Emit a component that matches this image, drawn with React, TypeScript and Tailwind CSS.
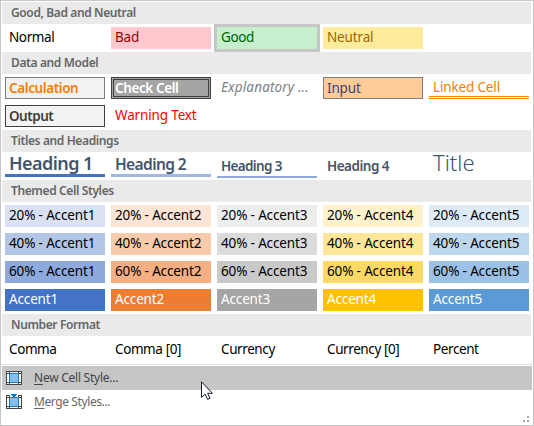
import React from "react";

type Cell = { label: string; box?: string; text?: string };

function Header({ title, tracking = "tracking-[-0.38px]" }: { title: string; tracking?: string }) {
  return (
    <h2 className={`h-[22px] w-[529px] bg-[#eaeaea] pl-[9px] text-[12px] leading-[22px] font-semibold text-[#666] ${tracking}`}>
      {title}
    </h2>
  );
}

function Row({ cells }: { cells: Cell[] }) {
  return (
    <div className="grid h-7 grid-cols-[repeat(5,100px)] items-center gap-x-1.5 pl-[3px]">
      {cells.map((c) => (
        <div key={c.label} className={`h-[22px] whitespace-nowrap ${c.box ?? ""}`}>
          <div className={`h-full pl-1 leading-[20px] ${c.text ?? "text-[13.5px] tracking-[-0.4px] text-black"}`}>{c.label}</div>
        </div>
      ))}
    </div>
  );
}

const body = "text-[13.5px] tracking-[-0.15px]";

const status: Cell[] = [
  { label: "Normal" },
  { label: "Bad", box: "bg-[#ffc7ce]", text: `${body} text-[#9c0006]` },
  { label: "Good", box: "bg-[#c6efce] outline-3 outline-[#c6c6c6]", text: "text-[13.5px] tracking-[-0.4px] text-[#006100]" },
  { label: "Neutral", box: "bg-[#ffeb9c]", text: `${body} text-[#9c6500]` },
];

const data: Cell[] = [
  { label: "Calculation", box: "bg-[#f2f2f2] border border-[#7f7f7f]", text: "text-[13.5px] font-semibold tracking-[-0.4px] text-[#fa7d00] pl-[3px]!" },
  { label: "Check Cell", box: "bg-[#a5a5a5] border-3 border-double border-[#3f3f3f]", text: "text-[13.5px] font-semibold tracking-[-0.4px] text-white pl-[1px]! leading-[16px]!" },
  { label: "Explanatory ...", text: "text-[13.5px] italic tracking-[0.15px] text-[#7f7f7f]" },
  { label: "Input", box: "bg-[#ffcc99] border border-[#7f7f7f]", text: `${body} text-[#3f3f76] pl-[3px]!` },
  { label: "Linked Cell", box: "border-b-3 border-double border-[#ff8001]", text: `${body} text-[#fa7d00]` },
];

const output: Cell[] = [
  { label: "Output", box: "bg-[#f2f2f2] border border-[#3f3f3f]", text: "text-[13.5px] font-semibold tracking-[-0.5px] text-[#3f3f3f] pl-[3px]!" },
  { label: "Warning Text", text: `${body} text-[#ff0000]` },
];

const headings: Cell[] = [
  { label: "Heading 1", box: "border-b-3 border-[#4472c4]", text: "text-[18px] font-semibold tracking-[-0.55px] text-[#44546a] leading-[17px]!" },
  { label: "Heading 2", box: "border-b-3 border-[#a2b8e1]", text: "text-[15.5px] font-semibold tracking-[-0.6px] text-[#44546a] leading-[19px]!" },
  { label: "Heading 3", box: "border-b-2 border-[#8ea9db] translate-y-px", text: "text-[13.5px] font-semibold tracking-[-0.65px] text-[#44546a] leading-[20px]!" },
  { label: "Heading 4", text: "text-[13.5px] font-semibold tracking-[-0.5px] text-[#44546a] leading-[22px]!" },
  { label: "Title", text: "text-[22px] font-light tracking-[0px] text-[#44546a] leading-[15px]!" },
];

const tints = [
  { pct: "20%", fills: ["bg-[#d9e1f2]", "bg-[#fce4d6]", "bg-[#ededed]", "bg-[#fff2cc]", "bg-[#ddebf7]"] },
  { pct: "40%", fills: ["bg-[#b4c6e7]", "bg-[#f8cbad]", "bg-[#dbdbdb]", "bg-[#ffe699]", "bg-[#bdd7ee]"] },
  { pct: "60%", fills: ["bg-[#8ea9db]", "bg-[#f4b084]", "bg-[#c9c9c9]", "bg-[#ffd966]", "bg-[#9bc2e6]"] },
];
const accents = ["bg-[#4472c4]", "bg-[#ed7d31]", "bg-[#a5a5a5]", "bg-[#ffc000]", "bg-[#5b9bd5]"];
const numbers: Cell[] = ["Comma", "Comma [0]", "Currency", "Currency [0]", "Percent"].map((label) => ({ label }));

function StyleIcon({ merge = false }: { merge?: boolean }) {
  return (
    <svg width="16" height="16" viewBox="0 0 16 16" shapeRendering="crispEdges">
      <path d="M0 1h16v14H0z" fill="#fff" />
      <path
        d="M0 1h16v1H0zM0 14h16v1H0zM0 1h1v14H0zM15 1h1v14h-1zM3 1h1v14H3zM12 1h1v14h-1zM0 3h16v1H0zM0 12h16v1H0z"
        fill="#444"
      />
      <path d="M3 3h10v10H3z" fill="#1979ca" />
      <path d="M4 4h8v8H4z" fill="#83beec" />
      {merge && (
        <>
          <path d="M4 0h8v3H4z" fill="#fff" />
          <path d="M5 0h6v1h-1v1H9v1H7V2H6V1H5z" fill="#0072c6" />
        </>
      )}
    </svg>
  );
}

function Action({ first, rest, active = false }: { first: string; rest: string; active?: boolean }) {
  return (
    <div className={`flex h-6 w-[530px] items-center pl-1 ${active ? "bg-[#c6c6c6] text-[#444]" : "text-[#666]"}`}>
      <StyleIcon merge={!active} />
      <span className={`ml-3 text-[12px] leading-6 ${active ? "tracking-[-0.25px]" : "tracking-[-0.4px]"}`}>
        <span className="underline underline-offset-2">{first}</span>
        {rest}
      </span>
    </div>
  );
}

export default function App() {
  return (
    <main className="relative h-[426px] w-[534px] overflow-hidden border border-[#c6c6c6] bg-white pt-px pl-px font-['Noto_Sans','Open_Sans',sans-serif]">
      <Header title="Good, Bad and Neutral" />
      <Row cells={status} />
      <Header title="Data and Model" />
      <Row cells={data} />
      <Row cells={output} />
      <Header title="Titles and Headings" />
      <Row cells={headings} />
      <Header title="Themed Cell Styles" />
      {tints.map((t) => (
        <Row
          key={t.pct}
          cells={t.fills.map((box, i) => ({ label: `${t.pct} - Accent${i + 1}`, box, text: `${body} text-black` }))}
        />
      ))}
      <Row cells={accents.map((box, i) => ({ label: `Accent${i + 1}`, box, text: `${body} text-white` }))} />
      <Header title="Number Format" />
      <Row cells={numbers} />
      <div className="h-0.5 w-[530px] border-t border-[#d5e5e8]" />
      <Action first="N" rest="ew Cell Style..." active />
      <Action first="M" rest="erge Styles..." />
      <svg className="absolute top-[380px] left-[200px]" width="13" height="20" viewBox="0 0 13 20">
        <path d="M.5.8v15.7l3.6-3.4 2.4 5.3 2.5-1.1-2.4-5h4.8z" fill="#fff" stroke="#111827" />
      </svg>
      <svg className="absolute top-[415px] left-[522px]" width="6" height="6" fill="#a6a6a6" shapeRendering="crispEdges">
        <path d="M4 0h2v2H4zM0 4h2v2H0zM4 4h2v2H4z" />
      </svg>
    </main>
  );
}
